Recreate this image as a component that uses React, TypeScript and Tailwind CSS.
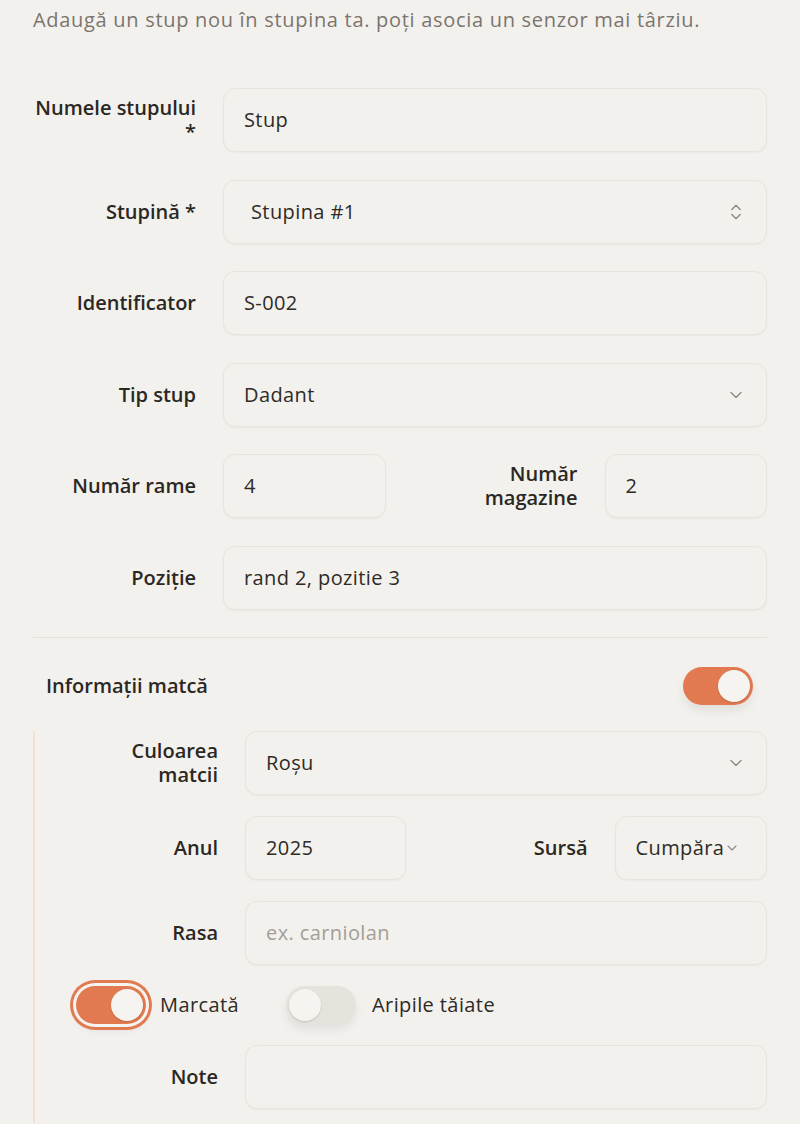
import { ChevronDown, ChevronsUpDown } from 'lucide-react';
import type { ReactNode } from 'react';

const font = { fontFamily: '"Open Sans", "Noto Sans", sans-serif' };

function Field({ children, className = '', muted = false }: { children?: ReactNode; className?: string; muted?: boolean }) {
  return (
    <div
      className={`flex h-16 min-w-0 flex-1 items-center rounded-xl border border-[#e8e4de] bg-[#f3f1ed] px-5 text-[20px] shadow-[0_1px_2px_rgba(0,0,0,0.04)] ${
        muted ? 'text-[#a39d96]' : 'text-[#2e2a26]'
      } ${className}`}
    >
      {children}
    </div>
  );
}

function Select({ value, updown = false }: { value: string; updown?: boolean }) {
  return (
    <Field>
      <span className={`flex-1 truncate ${updown ? 'pl-[7px]' : ''}`}>{value}</span>
      {updown ? (
        <ChevronsUpDown className="h-5 w-5 text-[#8d8780]" strokeWidth={1.6} />
      ) : (
        <ChevronDown className="h-5 w-5 text-[#8d8780]" strokeWidth={1.6} />
      )}
    </Field>
  );
}

function Label({ children, width = 'w-[163px]' }: { children: ReactNode; width?: string }) {
  return (
    <div className={`${width} shrink-0 text-right text-[20px] font-semibold leading-[24px] tracking-normal text-[#2b2723]`}>
      {children}
    </div>
  );
}

function Toggle({ on, ring = false }: { on: boolean; ring?: boolean }) {
  return (
    <div
      className={`flex h-[38px] w-[70px] shrink-0 items-center rounded-full p-[3px] shadow-[0_6px_10px_rgba(0,0,0,0.07)] ${
        on ? 'justify-end bg-[#e27a51]' : 'justify-start bg-[#e6e2dc]'
      } ${ring ? 'ring-[3px] ring-[#e27a51] ring-offset-[3px] ring-offset-[#f6f4f0]' : ''}`}
    >
      <div className="h-[32px] w-[32px] rounded-full bg-[#f6f4f0] shadow-[0_1px_2px_rgba(0,0,0,0.15)]" />
    </div>
  );
}

export default function App() {
  return (
    <div className="min-h-[1124px] w-full bg-[#f3f1ed] px-[33px] tracking-[0.025em]" style={font}>
      <p className="pt-[5px] text-[20px] leading-[30px] tracking-[0.035em] text-[#7b756e]">
        Adaugă un stup nou în stupina ta. poți asocia un senzor mai târziu.
      </p>

      <div className="mt-[53px] flex flex-col gap-[27.6px]">
        <div className="flex items-center gap-[27px]">
          <Label>
            Numele stupului
            <br />*
          </Label>
          <Field>Stup</Field>
        </div>
        <div className="flex items-center gap-[27px]">
          <Label>Stupină *</Label>
          <Select value="Stupina #1" updown />
        </div>
        <div className="flex items-center gap-[27px]">
          <Label>Identificator</Label>
          <Field>S-002</Field>
        </div>
        <div className="flex items-center gap-[27px]">
          <Label>Tip stup</Label>
          <Select value="Dadant" />
        </div>
        <div className="flex items-center gap-[27px]">
          <Label>Număr rame</Label>
          <Field>4</Field>
          <Label width="w-[165px]">
            Număr
            <br />
            magazine
          </Label>
          <Field>2</Field>
        </div>
        <div className="flex items-center gap-[27px]">
          <Label>Poziție</Label>
          <Field>rand 2, pozitie 3</Field>
        </div>
      </div>

      <div className="mt-[27px] h-px bg-[#e4e0da]" />

      <div className="mt-[29px] flex items-center justify-between pl-[13px] pr-[14px]">
        <span className="text-[20px] font-semibold tracking-normal text-[#2b2723]">Informații matcă</span>
        <Toggle on />
      </div>

      <div className="mt-[26px] flex flex-col gap-[21px] border-l-2 border-[#f6dfcc] pb-[14px] pl-[20px]">
        <div className="flex items-center gap-[27px]">
          <Label>
            Culoarea
            <br />
            matcii
          </Label>
          <Select value="Roșu" />
        </div>
        <div className="flex items-center gap-[27px]">
          <Label>Anul</Label>
          <Field>2025</Field>
          <Label width="w-[155px]">Sursă</Label>
          <Field className="pr-3">
            <span className="truncate">Cumpăra</span>
            <ChevronDown className="h-4 w-4 shrink-0 text-[#8d8780]" strokeWidth={1.6} />
          </Field>
        </div>
        <div className="flex items-center gap-[27px]">
          <Label>Rasa</Label>
          <Field muted>ex. carniolan</Field>
        </div>
        <div className="flex items-center pl-[21px]">
          <Toggle on ring />
          <span className="ml-[14px] text-[20px] text-[#2e2a26]">Marcată</span>
          <div className="ml-[47px]">
            <Toggle on={false} />
          </div>
          <span className="ml-[16px] text-[20px] text-[#2e2a26]">Aripile tăiate</span>
        </div>
        <div className="flex items-center gap-[27px]">
          <Label>Note</Label>
          <Field />
        </div>
      </div>
    </div>
  );
}
